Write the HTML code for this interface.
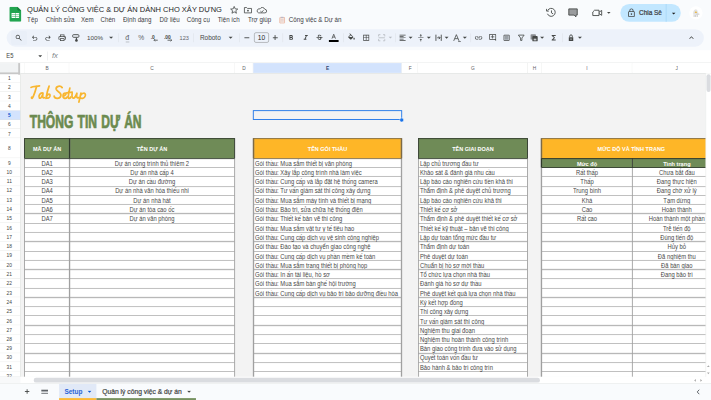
<!DOCTYPE html><html><head><meta charset="utf-8"><style>
html,body{margin:0;padding:0;width:711px;height:400px;overflow:hidden;background:#f9fbfd;}
#s{position:absolute;left:0;top:0;width:1600px;height:900px;transform:scale(0.444375);transform-origin:0 0;font-family:"Liberation Sans",sans-serif;background:#f9fbfd;overflow:hidden;}
.t{position:absolute;white-space:nowrap;line-height:0;height:0;}
.c{text-align:center;}
.b{position:absolute;box-sizing:border-box;}
.i{position:absolute;}
</style></head><body><div id="s">
<svg class="i" style="left:20.5px;top:15.4px" width="27" height="34" viewBox="0 0 27 34"><path d="M3 0 H18 L27 9 V31 A3 3 0 0 1 24 34 H3 A3 3 0 0 1 0 31 V3 A3 3 0 0 1 3 0Z" fill="#22a550"/><path d="M18 0 L27 9 H21 A3 3 0 0 1 18 6Z" fill="#16803c"/><rect x="5" y="14.5" width="17" height="11" rx="1" fill="#fff"/><rect x="5" y="17.8" width="17" height="1.1" fill="#22a550"/><rect x="5" y="21.3" width="17" height="1.1" fill="#22a550"/><rect x="12.9" y="14.5" width="1.1" height="11" fill="#22a550"/></svg>
<div class="t" style="left:61px;top:22.19px;font-size:18.2px;color:#1f1f1f;font-weight:normal;transform:scaleX(0.928);transform-origin:0 0;">QUẢN LÝ CÔNG VIỆC &amp; DỰ ÁN DÀNH CHO XÂY DỰNG</div>
<svg class="i" style="left:516px;top:12px" width="90" height="22" viewBox="0 0 90 22" fill="none" stroke="#444746" stroke-width="1.8">
<path d="M11 2.5 L13.3 8 L19 8.4 L14.6 12.1 L16 17.8 L11 14.7 L6 17.8 L7.4 12.1 L3 8.4 L8.7 8Z" stroke-linejoin="round"/>
<path d="M34 5 H39 L41 7 H50 V17 H34Z" stroke-linejoin="round"/><path d="M42 10 V14 M40 12 H44"/>
<path d="M66 17 H80 A4 4 0 0 0 80 9 A6 6 0 0 0 69 8 A4.5 4.5 0 0 0 66 17Z" stroke-linejoin="round"/><path d="M70 13 L73 15.5 L77 11"/>
</svg>
<div class="t" style="left:61px;top:45.30px;font-size:15px;color:#3c4043;font-weight:normal;transform:scaleX(0.935);transform-origin:0 0;">Tệp</div>
<div class="t" style="left:102.6px;top:45.30px;font-size:15px;color:#3c4043;font-weight:normal;transform:scaleX(0.935);transform-origin:0 0;">Chỉnh sửa</div>
<div class="t" style="left:182px;top:45.30px;font-size:15px;color:#3c4043;font-weight:normal;transform:scaleX(0.935);transform-origin:0 0;">Xem</div>
<div class="t" style="left:226px;top:45.30px;font-size:15px;color:#3c4043;font-weight:normal;transform:scaleX(0.935);transform-origin:0 0;">Chèn</div>
<div class="t" style="left:277px;top:45.30px;font-size:15px;color:#3c4043;font-weight:normal;transform:scaleX(0.935);transform-origin:0 0;">Định dạng</div>
<div class="t" style="left:359px;top:45.30px;font-size:15px;color:#3c4043;font-weight:normal;transform:scaleX(0.935);transform-origin:0 0;">Dữ liệu</div>
<div class="t" style="left:420px;top:45.30px;font-size:15px;color:#3c4043;font-weight:normal;transform:scaleX(0.935);transform-origin:0 0;">Công cụ</div>
<div class="t" style="left:490px;top:45.30px;font-size:15px;color:#3c4043;font-weight:normal;transform:scaleX(0.935);transform-origin:0 0;">Tiện ích</div>
<div class="t" style="left:558px;top:45.30px;font-size:15px;color:#3c4043;font-weight:normal;transform:scaleX(0.935);transform-origin:0 0;">Trợ giúp</div>
<svg class="i" style="left:628px;top:37px" width="14" height="16" viewBox="0 0 14 16">
<rect x="1.5" y="2" width="11" height="13.5" rx="1.5" fill="#f3e3dc" stroke="#e9a88e" stroke-width="1.5"/>
<rect x="4" y="0.5" width="6" height="3" rx="1" fill="#b9b9c9"/>
<path d="M4 7 H10 M4 10 H10" stroke="#d9c0c0" stroke-width="1"/></svg>
<div class="t" style="left:650px;top:45.30px;font-size:15px;color:#3c4043;font-weight:normal;transform:scaleX(0.935);transform-origin:0 0;">Công việc &amp; Dự án</div>
<svg class="i" style="left:1226px;top:14px" width="160" height="30" viewBox="0 0 160 30" fill="none" stroke="#444746" stroke-width="2">
<path d="M6.5 9.5 A9 9 0 1 1 6 17" /><path d="M4 6 V11 H9" stroke-linejoin="round"/><path d="M15 9.5 V15 L19 17.5"/>
<path d="M54 6 H73 V20 H70 V24 L66 20 H54Z" stroke-linejoin="round" fill="#9a9c9e"/>
<path d="M112 9 H122 V21 H108 V13Z M122 13.5 L128 9.5 V20.5 L122 16.5" stroke-linejoin="round"/>
<path d="M140 13 L144 17 L148 13Z" fill="#444746" stroke="none"/>
</svg>
<div class="b" style="left:1396px;top:9px;width:136px;height:40px;background:#c2e7ff;border-radius:20px;"></div>
<div class="b" style="left:1498px;top:9px;width:2px;height:40px;background:#a9d7f7;"></div>
<svg class="i" style="left:1410px;top:18px" width="22" height="22" viewBox="0 0 24 24"><path fill="#444746" d="M18 8h-1V6c0-2.76-2.24-5-5-5S7 3.24 7 6v2H6c-1.1 0-2 .9-2 2v10c0 1.1.9 2 2 2h12c1.1 0 2-.9 2-2V10c0-1.1-.9-2-2-2zM9 6c0-1.66 1.34-3 3-3s3 1.34 3 3v2H9V6zm9 14H6V10h12v10zm-6-3c1.1 0 2-.9 2-2s-.9-2-2-2-2 .9-2 2 .9 2 2 2z"/></svg>
<div class="t" style="left:1438px;top:28.98px;font-size:14.5px;color:#3c4043;font-weight:normal;-webkit-text-stroke:0.5px #3c4043;">Chia Sẻ</div>
<svg class="i" style="left:1511px;top:27px" width="10" height="8" viewBox="0 0 12 10"><path d="M1 2 L6 7 L11 2Z" fill="#1f1f1f"/></svg>
<svg class="i" style="left:1550px;top:13px" width="32" height="32" viewBox="0 0 32 32"><circle cx="16" cy="16" r="15" fill="#fff"/><path d="M10 20 Q9 10 15 8 Q20 8 20 13 L22 17 Q23 21 19 21Z" fill="#e3e3e3"/><ellipse cx="16" cy="14.5" rx="2.5" ry="1.6" fill="#e9b43a"/><path d="M11 23 H13 M14.5 23 H16.5 M18 23 H20" stroke="#555" stroke-width="1.5"/><path d="M17 19 H24" stroke="#ccc" stroke-width="2"/></svg>
<div class="b" style="left:15px;top:65.5px;width:1569px;height:39px;background:#edf2fa;border-radius:20px;"></div>
<div class="b" style="left:25px;top:69.5px;width:36px;height:31px;background:#e9eff8;border-radius:4px;"></div>
<svg class="i" style="left:32.80px;top:75.75px" width="18" height="18" viewBox="0 -960 960 960"><path d="M784-120 532-372q-30 24-69 38t-83 14q-109 0-184.5-75.5T120-580q0-109 75.5-184.5T380-840q109 0 184.5 75.5T640-580q0 44-14 83t-38 69l252 252-56 56ZM380-400q75 0 127.5-52.5T560-580q0-75-52.5-127.5T380-760q-75 0-127.5 52.5T200-580q0 75 52.5 127.5T380-400Z" fill="#444746"/></svg>
<svg class="i" style="left:68.80px;top:76.75px" width="18" height="18" viewBox="0 -960 960 960"><path d="M280-200v-80h284q63 0 109.5-40T720-420q0-60-46.5-100T564-560H312l104 104-56 56-200-200 200-200 56 56-104 104h252q97 0 166.5 63T800-420q0 94-69.5 157T564-200H280Z" fill="#444746"/></svg>
<svg class="i" style="left:99.00px;top:76.75px" width="18" height="18" viewBox="0 -960 960 960"><path d="M396-200q-97 0-166.5-63T160-420q0-94 69.5-157T396-640h252L544-744l56-56 200 200-200 200-56-56 104-104H396q-63 0-109.5 40T240-420q0 60 46.5 100T396-280h284v80H396Z" fill="#444746"/></svg>
<svg class="i" style="left:129.70px;top:74.75px" width="20" height="20" viewBox="0 -960 960 960"><path d="M640-640v-120H320v120h-80v-200h480v200h-80Zm-480 80h640-640Zm560 100q17 0 28.5-11.5T760-500q0-17-11.5-28.5T720-540q-17 0-28.5 11.5T680-500q0 17 11.5 28.5T720-460Zm-80 260v-160H320v160h320Zm80 80H240v-160H80v-240q0-51 35-85.5t85-34.5h560q51 0 85.5 34.5T880-520v240H720v160Zm80-240v-160q0-17-11.5-28.5T760-560H200q-17 0-28.5 11.5T160-520v160h80v-80h480v80h80Z" fill="#444746"/></svg>
<svg class="i" style="left:161.00px;top:74.75px" width="20" height="20" viewBox="0 0 20 20"><rect x="2.5" y="3" width="14" height="6" rx="2" fill="none" stroke="#444746" stroke-width="2"/><path d="M11 9 L8 16 A3 3 0 0 0 14 16 Z" fill="#444746"/></svg>
<div class="t" style="left:196px;top:85.15px;font-size:14px;color:#444746;font-weight:normal;">100%</div>
<svg class="i" style="left:245.0px;top:82px" width="10" height="6" viewBox="0 0 10 6"><path d="M0 0 L5 5 L10 0Z" fill="#444746"/></svg>
<div class="b" style="left:266px;top:74.6px;width:1.2px;height:20px;background:#d9dde3;"></div>
<div class="b" style="left:435px;top:74.6px;width:1.2px;height:20px;background:#d9dde3;"></div>
<div class="b" style="left:538.7px;top:74.6px;width:1.2px;height:20px;background:#d9dde3;"></div>
<div class="b" style="left:636px;top:74.6px;width:1.2px;height:20px;background:#d9dde3;"></div>
<div class="b" style="left:773px;top:74.6px;width:1.2px;height:20px;background:#d9dde3;"></div>
<div class="b" style="left:889.3px;top:74.6px;width:1.2px;height:20px;background:#d9dde3;"></div>
<div class="b" style="left:1058.8px;top:74.6px;width:1.2px;height:20px;background:#d9dde3;"></div>
<div class="b" style="left:1265.8px;top:74.6px;width:1.2px;height:20px;background:#d9dde3;"></div>
<div class="t" style="left:282px;top:85.46px;font-size:16px;color:#5f6368;font-weight:normal;">đ</div>
<div class="b" style="left:282.5px;top:93.5px;width:8px;height:1.3px;background:#80868b;"></div>
<div class="t" style="left:311px;top:85.80px;font-size:15px;color:#5f6368;font-weight:normal;">%</div>
<svg class="i" style="left:338.00px;top:74.75px" width="20" height="20" viewBox="0 0 20 20"><text x="1" y="12" font-size="11" font-weight="bold" fill="#444746" font-family="Liberation Sans">.0</text><path d="M17 15.5 H9 M11 13 L8.5 15.5 L11 18" stroke="#444746" stroke-width="1.8" fill="none"/></svg>
<svg class="i" style="left:369.00px;top:74.75px" width="22" height="20" viewBox="0 0 22 20"><text x="0" y="12" font-size="11" font-weight="bold" fill="#444746" font-family="Liberation Sans">.00</text><path d="M8 15.5 H17 M15 13 L17.5 15.5 L15 18" stroke="#444746" stroke-width="1.8" fill="none"/></svg>
<div class="t" style="left:403.5px;top:85.65px;font-size:14px;color:#5f6368;font-weight:normal;transform:scaleX(0.9);transform-origin:0 0;">123</div>
<div class="t" style="left:450px;top:85.48px;font-size:14.5px;color:#444746;font-weight:normal;">Roboto</div>
<svg class="i" style="left:514.0px;top:82px" width="10" height="6" viewBox="0 0 10 6"><path d="M0 0 L5 5 L10 0Z" fill="#444746"/></svg>
<div class="b" style="left:549.5px;top:84px;width:11px;height:1.6px;background:#444746;"></div>
<div class="b" style="left:613.5px;top:84px;width:11px;height:1.6px;background:#444746;"></div>
<div class="b" style="left:618.2px;top:79px;width:1.6px;height:11px;background:#444746;"></div>
<div class="b" style="left:572px;top:73.4px;width:33.3px;height:22.6px;border:1.5px solid #747775;border-radius:4px;"></div>
<div class="t c" style="left:188.60000000000002px;width:800px;top:85.30px;font-size:15px;color:#1f1f1f;font-weight:normal;">10</div>
<svg class="i" style="left:646.00px;top:75.75px" width="18" height="18" viewBox="0 0 24 24"><path d="M15.6 10.79c.97-.67 1.65-1.77 1.65-2.79 0-2.26-1.75-4-4-4H7v14h7.04c2.09 0 3.71-1.7 3.71-3.79 0-1.52-.86-2.82-2.15-3.42zM10 6.5h3c.83 0 1.5.67 1.5 1.5s-.67 1.5-1.5 1.5h-3v-3zm3.5 9H10v-3h3.5c.83 0 1.5.67 1.5 1.5s-.67 1.5-1.5 1.5z" fill="#444746"/></svg>
<svg class="i" style="left:679.00px;top:75.75px" width="18" height="18" viewBox="0 0 24 24"><path d="M10 4v3h2.21l-3.42 8H6v3h8v-3h-2.21l3.42-8H18V4z" fill="#444746"/></svg>
<svg class="i" style="left:710.00px;top:75.75px" width="18" height="18" viewBox="0 0 24 24"><path d="M7.24 8.75c-.26-.48-.39-1.03-.39-1.67 0-.61.13-1.16.4-1.67.26-.5.63-.93 1.11-1.29.48-.35 1.05-.63 1.7-.83.66-.19 1.39-.29 2.18-.29.81 0 1.54.11 2.21.34.66.22 1.23.54 1.69.94.47.4.83.88 1.08 1.43.25.55.38 1.15.38 1.81h-3.01c0-.31-.05-.59-.15-.85-.09-.27-.24-.49-.44-.68-.2-.19-.45-.33-.75-.44-.3-.1-.66-.16-1.06-.16-.39 0-.74.04-1.03.13-.29.09-.53.21-.72.36-.19.16-.34.34-.44.55-.1.21-.15.43-.15.66 0 .48.25.88.74 1.21.38.25.77.48 1.41.7H7.39c-.05-.08-.11-.17-.15-.25zM21 12v-2H3v2h9.62c.18.07.4.14.55.2.37.17.66.34.87.51.21.17.35.36.43.57.07.2.11.43.11.69 0 .23-.05.45-.14.66-.09.2-.23.38-.42.53-.19.15-.42.26-.71.35-.29.08-.63.13-1.01.13-.43 0-.83-.04-1.18-.13s-.66-.23-.91-.42c-.25-.19-.45-.44-.59-.75-.14-.31-.25-.76-.25-1.21H6.4c0 .55.08 1.13.24 1.58.16.45.37.85.65 1.21.28.35.6.66.98.92.37.26.78.48 1.22.65.44.17.9.3 1.38.39.48.08.96.13 1.44.13.8 0 1.53-.09 2.18-.28s1.21-.45 1.67-.79c.46-.34.82-.77 1.07-1.27s.38-1.07.38-1.71c0-.6-.1-1.14-.31-1.61-.05-.11-.11-.23-.17-.33H21z" fill="#444746"/></svg>
<svg class="i" style="left:739.00px;top:73.75px" width="24" height="22" viewBox="0 0 24 22"><path d="M8 13 L12 3 L16 13 M9.5 9.5 H14.5" stroke="#444746" stroke-width="1.7" fill="none"/><rect x="1" y="16" width="22" height="4.5" fill="#000"/></svg>
<svg class="i" style="left:781.00px;top:74.75px" width="20" height="20" viewBox="0 0 24 24"><path d="M16.56 8.94 7.62 0 6.21 1.41l2.38 2.38-5.15 5.15c-.59.59-.59 1.54 0 2.12l5.5 5.5c.29.29.68.44 1.06.44s.77-.15 1.06-.44l5.5-5.5c.59-.58.59-1.53 0-2.12zM5.21 10 10 5.21 14.79 10H5.21zM19 11.5s-2 2.17-2 3.5c0 1.1.9 2 2 2s2-.9 2-2c0-1.33-2-3.5-2-3.5z" fill="#444746"/></svg>
<svg class="i" style="left:815.00px;top:75.75px" width="18" height="18" viewBox="0 0 24 24"><path d="M3 3v18h18V3H3zm8 16H5v-6h6v6zm0-8H5V5h6v6zm8 8h-6v-6h6v6zm0-8h-6V5h6v6z" fill="#444746"/></svg>
<svg class="i" style="left:849.50px;top:75.75px" width="18" height="18" viewBox="0 0 18 18"><g fill="none" stroke="#b9bdc3" stroke-width="2"><path d="M2 6 V2 H6 M12 2 H16 V6 M2 12 V16 H6 M12 16 H16 V12 M2 9 H16"/></g></svg>
<svg class="i" style="left:874.0px;top:82px" width="9" height="6" viewBox="0 0 10 6"><path d="M0 0 L5 5 L10 0Z" fill="#b9bdc3"/></svg>
<svg class="i" style="left:897.00px;top:75.75px" width="18" height="18" viewBox="0 0 24 24"><path d="M15 15H3v2h12v-2zm0-8H3v2h12V7zM3 13h18v-2H3v2zm0 8h18v-2H3v2zM3 3v2h18V3H3z" fill="#444746"/></svg>
<svg class="i" style="left:919.4px;top:82px" width="10" height="6" viewBox="0 0 10 6"><path d="M0 0 L5 5 L10 0Z" fill="#444746"/></svg>
<svg class="i" style="left:938.00px;top:75.75px" width="18" height="18" viewBox="0 0 24 24"><path d="M8 19h3v4h2v-4h3l-4-4-4 4zm8-14h-3V1h-2v4H8l4 4 4-4zM4 11v2h16v-2H4z" fill="#444746"/></svg>
<svg class="i" style="left:960.4px;top:82px" width="10" height="6" viewBox="0 0 10 6"><path d="M0 0 L5 5 L10 0Z" fill="#444746"/></svg>
<svg class="i" style="left:978.00px;top:75.75px" width="18" height="18" viewBox="0 0 18 18"><g fill="none" stroke="#444746" stroke-width="2"><path d="M3 2 V16 M15 2 V16 M6 9 H12 M9.5 6 L12.5 9 L9.5 12"/></g></svg>
<svg class="i" style="left:999.6px;top:82px" width="10" height="6" viewBox="0 0 10 6"><path d="M0 0 L5 5 L10 0Z" fill="#444746"/></svg>
<svg class="i" style="left:1018.00px;top:74.75px" width="20" height="20" viewBox="0 0 20 20"><path d="M3 17 L9 3 L15 17 M5.5 12 H12.5" stroke="#444746" stroke-width="1.8" fill="none"/><path d="M13 18.5 H19" stroke="#444746" stroke-width="1.6"/></svg>
<svg class="i" style="left:1040.5px;top:82px" width="10" height="6" viewBox="0 0 10 6"><path d="M0 0 L5 5 L10 0Z" fill="#444746"/></svg>
<svg class="i" style="left:1067.00px;top:74.75px" width="20" height="20" viewBox="0 0 24 24"><path d="M3.9 12c0-1.71 1.39-3.1 3.1-3.1h4V7H7c-2.76 0-5 2.24-5 5s2.24 5 5 5h4v-1.9H7c-1.71 0-3.1-1.39-3.1-3.1zM8 13h8v-2H8v2zm9-6h-4v1.9h4c1.71 0 3.1 1.39 3.1 3.1s-1.39 3.1-3.1 3.1h-4V17h4c2.76 0 5-2.24 5-5s-2.24-5-5-5z" fill="#444746"/></svg>
<svg class="i" style="left:1099.20px;top:75.25px" width="19" height="19" viewBox="0 0 24 24"><path d="M22 4c0-1.1-.9-2-2-2H4c-1.1 0-1.99.9-1.99 2L2 16c0 1.1.9 2 2 2h14l4 4V4zm-2 13.17L18.83 16H4V4h16v13.17zM13 5h-2v4H7v2h4v4h2v-4h4V9h-4z" fill="#444746"/></svg>
<svg class="i" style="left:1131.00px;top:75.75px" width="18" height="18" viewBox="0 0 24 24"><rect x="6" y="6" width="12" height="12" fill="#9aa0a6"/><path d="M19 3H5c-1.1 0-2 .9-2 2v14c0 1.1.9 2 2 2h14c1.1 0 2-.9 2-2V5c0-1.1-.9-2-2-2zm0 16H5V5h14v14z" fill="#444746"/></svg>
<svg class="i" style="left:1163.80px;top:75.75px" width="18" height="18" viewBox="0 0 18 18"><path d="M2.5 3 H15.5 L10.5 9.5 V15 L7.5 15 V9.5Z" fill="none" stroke="#444746" stroke-width="1.8" stroke-linejoin="round"/></svg>
<svg class="i" style="left:1191.70px;top:74.75px" width="20" height="20" viewBox="0 0 20 20"><rect x="2" y="2" width="12" height="12" rx="2" fill="#8a8d91"/><rect x="6" y="6" width="12" height="12" rx="2" fill="#444746"/><rect x="9" y="12" width="6" height="4" fill="#c7c9cc"/></svg>
<svg class="i" style="left:1215.0px;top:82px" width="10" height="6" viewBox="0 0 10 6"><path d="M0 0 L5 5 L10 0Z" fill="#444746"/></svg>
<svg class="i" style="left:1237.00px;top:75.75px" width="18" height="18" viewBox="0 0 24 24"><path d="M18 4H6v2l6.5 6L6 18v2h12v-3h-7l5-5-5-5h7z" fill="#444746"/></svg>
<svg class="i" style="left:1276.00px;top:75.75px" width="18" height="18" viewBox="0 0 18 18"><path d="M4 8 H14 V16 H4Z" fill="#444746"/><path d="M6 8 V5.5 A3 3 0 0 1 12 5.5 V8" stroke="#444746" stroke-width="2" fill="none"/><circle cx="9" cy="12" r="1.5" fill="#edf2fa"/></svg>
<svg class="i" style="left:1300.4px;top:82px" width="10" height="6" viewBox="0 0 10 6"><path d="M0 0 L5 5 L10 0Z" fill="#444746"/></svg>
<svg class="i" style="left:1546.00px;top:74.75px" width="20" height="20" viewBox="0 0 24 24"><path d="M12 8l-6 6 1.41 1.41L12 10.83l4.59 4.58L18 14z" fill="#444746"/></svg>
<div class="b" style="left:0px;top:113.4px;width:1600px;height:27.1px;background:#fff;"></div>
<div class="t" style="left:14px;top:126.13px;font-size:15.5px;color:#444746;font-weight:normal;transform:scaleX(0.85);transform-origin:0 0;">E5</div>
<svg class="i" style="left:85.5px;top:123.5px" width="9" height="6" viewBox="0 0 10 6"><path d="M0 0 L5 5 L10 0Z" fill="#444746"/></svg>
<div class="b" style="left:106px;top:116px;width:1px;height:20px;background:#dadce0;"></div>
<div class="t" style="left:117px;top:126.11px;font-size:17px;color:#80868b;font-weight:normal;font-style:italic;">fx</div>
<div class="b" style="left:46px;top:165.2px;width:1542px;height:683.0px;background:#f3f3f3;"></div>
<div class="b" style="left:0px;top:140.5px;width:1600px;height:24.69999999999999px;background:#fff;border-top:1px solid #e1e3e1;border-bottom:1px solid #c4c7c5;"></div>
<div class="b" style="left:46px;top:141.5px;width:9.399999999999999px;height:22.69999999999999px;background:#fff;border-right:1px solid #e1e3e1;"></div>
<div class="b" style="left:55.4px;top:141.5px;width:101.0px;height:22.69999999999999px;background:#fff;border-right:1px solid #e1e3e1;"></div>
<div class="t c" style="left:-294.1px;width:800px;top:153.34px;font-size:12px;color:#5f6368;font-weight:normal;transform:scaleX(0.9);transform-origin:50% 0;">B</div>
<div class="b" style="left:156.4px;top:141.5px;width:371.30000000000007px;height:22.69999999999999px;background:#fff;border-right:1px solid #e1e3e1;"></div>
<div class="t c" style="left:-57.94999999999999px;width:800px;top:153.34px;font-size:12px;color:#5f6368;font-weight:normal;transform:scaleX(0.9);transform-origin:50% 0;">C</div>
<div class="b" style="left:527.7px;top:141.5px;width:42.09999999999991px;height:22.69999999999999px;background:#fff;border-right:1px solid #e1e3e1;"></div>
<div class="t c" style="left:148.75px;width:800px;top:153.34px;font-size:12px;color:#5f6368;font-weight:normal;transform:scaleX(0.9);transform-origin:50% 0;">D</div>
<div class="b" style="left:569.8px;top:141.5px;width:334.4000000000001px;height:22.69999999999999px;background:#d3e3fd;border-right:1px solid #e1e3e1;"></div>
<div class="t c" style="left:337.0px;width:800px;top:153.34px;font-size:12px;color:#33466e;font-weight:bold;transform:scaleX(0.9);transform-origin:50% 0;">E</div>
<div class="b" style="left:904.2px;top:141.5px;width:37.09999999999991px;height:22.69999999999999px;background:#fff;border-right:1px solid #e1e3e1;"></div>
<div class="t c" style="left:522.75px;width:800px;top:153.34px;font-size:12px;color:#5f6368;font-weight:normal;transform:scaleX(0.9);transform-origin:50% 0;">F</div>
<div class="b" style="left:941.3px;top:141.5px;width:246.20000000000005px;height:22.69999999999999px;background:#fff;border-right:1px solid #e1e3e1;"></div>
<div class="t c" style="left:664.4000000000001px;width:800px;top:153.34px;font-size:12px;color:#5f6368;font-weight:normal;transform:scaleX(0.9);transform-origin:50% 0;">G</div>
<div class="b" style="left:1187.5px;top:141.5px;width:31.09999999999991px;height:22.69999999999999px;background:#fff;border-right:1px solid #e1e3e1;"></div>
<div class="t c" style="left:803.05px;width:800px;top:153.34px;font-size:12px;color:#5f6368;font-weight:normal;transform:scaleX(0.9);transform-origin:50% 0;">H</div>
<div class="b" style="left:1218.6px;top:141.5px;width:204.80000000000018px;height:22.69999999999999px;background:#fff;border-right:1px solid #e1e3e1;"></div>
<div class="t c" style="left:921.0px;width:800px;top:153.34px;font-size:12px;color:#5f6368;font-weight:normal;transform:scaleX(0.9);transform-origin:50% 0;">I</div>
<div class="b" style="left:1423.4px;top:141.5px;width:199.5999999999999px;height:22.69999999999999px;background:#fff;border-right:1px solid #e1e3e1;"></div>
<div class="t c" style="left:1123.2px;width:800px;top:153.34px;font-size:12px;color:#5f6368;font-weight:normal;transform:scaleX(0.9);transform-origin:50% 0;">J</div>
<div class="b" style="left:0px;top:165.2px;width:46px;height:20.879999999999995px;background:#fff;border-bottom:1px solid #e1e3e1;border-right:1px solid #e1e3e1;"></div>
<div class="t c" style="left:-379px;width:800px;top:175.83px;font-size:11px;color:#444746;font-weight:normal;">1</div>
<div class="b" style="left:0px;top:186.07999999999998px;width:46px;height:20.879999999999995px;background:#fff;border-bottom:1px solid #e1e3e1;border-right:1px solid #e1e3e1;"></div>
<div class="t c" style="left:-379px;width:800px;top:196.71px;font-size:11px;color:#444746;font-weight:normal;">2</div>
<div class="b" style="left:0px;top:206.95999999999998px;width:46px;height:20.879999999999995px;background:#fff;border-bottom:1px solid #e1e3e1;border-right:1px solid #e1e3e1;"></div>
<div class="t c" style="left:-379px;width:800px;top:217.59px;font-size:11px;color:#444746;font-weight:normal;">3</div>
<div class="b" style="left:0px;top:227.83999999999997px;width:46px;height:20.879999999999995px;background:#fff;border-bottom:1px solid #e1e3e1;border-right:1px solid #e1e3e1;"></div>
<div class="t c" style="left:-379px;width:800px;top:238.47px;font-size:11px;color:#444746;font-weight:normal;">4</div>
<div class="b" style="left:0px;top:248.71999999999997px;width:46px;height:20.879999999999995px;background:#d3e3fd;border-bottom:1px solid #e1e3e1;border-right:1px solid #e1e3e1;"></div>
<div class="t c" style="left:-379px;width:800px;top:259.35px;font-size:11px;color:#0b57d0;font-weight:bold;">5</div>
<div class="b" style="left:0px;top:269.59999999999997px;width:46px;height:20.879999999999995px;background:#fff;border-bottom:1px solid #e1e3e1;border-right:1px solid #e1e3e1;"></div>
<div class="t c" style="left:-379px;width:800px;top:280.23px;font-size:11px;color:#444746;font-weight:normal;">6</div>
<div class="b" style="left:0px;top:290.47999999999996px;width:46px;height:20.879999999999995px;background:#fff;border-bottom:1px solid #e1e3e1;border-right:1px solid #e1e3e1;"></div>
<div class="t c" style="left:-379px;width:800px;top:301.11px;font-size:11px;color:#444746;font-weight:normal;">7</div>
<div class="b" style="left:0px;top:311.35999999999996px;width:46px;height:44.69999999999999px;background:#fff;border-bottom:1px solid #e1e3e1;border-right:1px solid #e1e3e1;"></div>
<div class="t c" style="left:-379px;width:800px;top:333.90px;font-size:11px;color:#444746;font-weight:normal;">8</div>
<div class="b" style="left:0px;top:356.05999999999995px;width:46px;height:20.879999999999995px;background:#fff;border-bottom:1px solid #e1e3e1;border-right:1px solid #e1e3e1;"></div>
<div class="t c" style="left:-379px;width:800px;top:366.69px;font-size:11px;color:#444746;font-weight:normal;">9</div>
<div class="b" style="left:0px;top:376.93999999999994px;width:46px;height:20.879999999999995px;background:#fff;border-bottom:1px solid #e1e3e1;border-right:1px solid #e1e3e1;"></div>
<div class="t c" style="left:-379px;width:800px;top:387.57px;font-size:11px;color:#444746;font-weight:normal;">10</div>
<div class="b" style="left:0px;top:397.81999999999994px;width:46px;height:20.879999999999995px;background:#fff;border-bottom:1px solid #e1e3e1;border-right:1px solid #e1e3e1;"></div>
<div class="t c" style="left:-379px;width:800px;top:408.45px;font-size:11px;color:#444746;font-weight:normal;">11</div>
<div class="b" style="left:0px;top:418.69999999999993px;width:46px;height:20.879999999999995px;background:#fff;border-bottom:1px solid #e1e3e1;border-right:1px solid #e1e3e1;"></div>
<div class="t c" style="left:-379px;width:800px;top:429.33px;font-size:11px;color:#444746;font-weight:normal;">12</div>
<div class="b" style="left:0px;top:439.5799999999999px;width:46px;height:20.879999999999995px;background:#fff;border-bottom:1px solid #e1e3e1;border-right:1px solid #e1e3e1;"></div>
<div class="t c" style="left:-379px;width:800px;top:450.21px;font-size:11px;color:#444746;font-weight:normal;">13</div>
<div class="b" style="left:0px;top:460.4599999999999px;width:46px;height:20.879999999999995px;background:#fff;border-bottom:1px solid #e1e3e1;border-right:1px solid #e1e3e1;"></div>
<div class="t c" style="left:-379px;width:800px;top:471.09px;font-size:11px;color:#444746;font-weight:normal;">14</div>
<div class="b" style="left:0px;top:481.3399999999999px;width:46px;height:20.879999999999995px;background:#fff;border-bottom:1px solid #e1e3e1;border-right:1px solid #e1e3e1;"></div>
<div class="t c" style="left:-379px;width:800px;top:491.97px;font-size:11px;color:#444746;font-weight:normal;">15</div>
<div class="b" style="left:0px;top:502.2199999999999px;width:46px;height:20.879999999999995px;background:#fff;border-bottom:1px solid #e1e3e1;border-right:1px solid #e1e3e1;"></div>
<div class="t c" style="left:-379px;width:800px;top:512.85px;font-size:11px;color:#444746;font-weight:normal;">16</div>
<div class="b" style="left:0px;top:523.0999999999999px;width:46px;height:20.879999999999995px;background:#fff;border-bottom:1px solid #e1e3e1;border-right:1px solid #e1e3e1;"></div>
<div class="t c" style="left:-379px;width:800px;top:533.73px;font-size:11px;color:#444746;font-weight:normal;">17</div>
<div class="b" style="left:0px;top:543.9799999999999px;width:46px;height:20.879999999999995px;background:#fff;border-bottom:1px solid #e1e3e1;border-right:1px solid #e1e3e1;"></div>
<div class="t c" style="left:-379px;width:800px;top:554.61px;font-size:11px;color:#444746;font-weight:normal;">18</div>
<div class="b" style="left:0px;top:564.8599999999999px;width:46px;height:20.879999999999995px;background:#fff;border-bottom:1px solid #e1e3e1;border-right:1px solid #e1e3e1;"></div>
<div class="t c" style="left:-379px;width:800px;top:575.49px;font-size:11px;color:#444746;font-weight:normal;">19</div>
<div class="b" style="left:0px;top:585.7399999999999px;width:46px;height:20.879999999999995px;background:#fff;border-bottom:1px solid #e1e3e1;border-right:1px solid #e1e3e1;"></div>
<div class="t c" style="left:-379px;width:800px;top:596.37px;font-size:11px;color:#444746;font-weight:normal;">20</div>
<div class="b" style="left:0px;top:606.6199999999999px;width:46px;height:20.879999999999995px;background:#fff;border-bottom:1px solid #e1e3e1;border-right:1px solid #e1e3e1;"></div>
<div class="t c" style="left:-379px;width:800px;top:617.25px;font-size:11px;color:#444746;font-weight:normal;">21</div>
<div class="b" style="left:0px;top:627.4999999999999px;width:46px;height:20.879999999999995px;background:#fff;border-bottom:1px solid #e1e3e1;border-right:1px solid #e1e3e1;"></div>
<div class="t c" style="left:-379px;width:800px;top:638.13px;font-size:11px;color:#444746;font-weight:normal;">22</div>
<div class="b" style="left:0px;top:648.3799999999999px;width:46px;height:20.879999999999995px;background:#fff;border-bottom:1px solid #e1e3e1;border-right:1px solid #e1e3e1;"></div>
<div class="t c" style="left:-379px;width:800px;top:659.01px;font-size:11px;color:#444746;font-weight:normal;">23</div>
<div class="b" style="left:0px;top:669.2599999999999px;width:46px;height:20.879999999999995px;background:#fff;border-bottom:1px solid #e1e3e1;border-right:1px solid #e1e3e1;"></div>
<div class="t c" style="left:-379px;width:800px;top:679.89px;font-size:11px;color:#444746;font-weight:normal;">24</div>
<div class="b" style="left:0px;top:690.1399999999999px;width:46px;height:20.879999999999995px;background:#fff;border-bottom:1px solid #e1e3e1;border-right:1px solid #e1e3e1;"></div>
<div class="t c" style="left:-379px;width:800px;top:700.77px;font-size:11px;color:#444746;font-weight:normal;">25</div>
<div class="b" style="left:0px;top:711.0199999999999px;width:46px;height:20.879999999999995px;background:#fff;border-bottom:1px solid #e1e3e1;border-right:1px solid #e1e3e1;"></div>
<div class="t c" style="left:-379px;width:800px;top:721.65px;font-size:11px;color:#444746;font-weight:normal;">26</div>
<div class="b" style="left:0px;top:731.8999999999999px;width:46px;height:20.879999999999995px;background:#fff;border-bottom:1px solid #e1e3e1;border-right:1px solid #e1e3e1;"></div>
<div class="t c" style="left:-379px;width:800px;top:742.53px;font-size:11px;color:#444746;font-weight:normal;">27</div>
<div class="b" style="left:0px;top:752.7799999999999px;width:46px;height:20.879999999999995px;background:#fff;border-bottom:1px solid #e1e3e1;border-right:1px solid #e1e3e1;"></div>
<div class="t c" style="left:-379px;width:800px;top:763.41px;font-size:11px;color:#444746;font-weight:normal;">28</div>
<div class="b" style="left:0px;top:773.6599999999999px;width:46px;height:20.879999999999995px;background:#fff;border-bottom:1px solid #e1e3e1;border-right:1px solid #e1e3e1;"></div>
<div class="t c" style="left:-379px;width:800px;top:784.29px;font-size:11px;color:#444746;font-weight:normal;">29</div>
<div class="b" style="left:0px;top:794.5399999999998px;width:46px;height:20.879999999999995px;background:#fff;border-bottom:1px solid #e1e3e1;border-right:1px solid #e1e3e1;"></div>
<div class="t c" style="left:-379px;width:800px;top:805.17px;font-size:11px;color:#444746;font-weight:normal;">30</div>
<div class="b" style="left:0px;top:815.4199999999998px;width:46px;height:20.879999999999995px;background:#fff;border-bottom:1px solid #e1e3e1;border-right:1px solid #e1e3e1;"></div>
<div class="t c" style="left:-379px;width:800px;top:826.05px;font-size:11px;color:#444746;font-weight:normal;">31</div>
<div class="b" style="left:0px;top:836.2999999999998px;width:46px;height:11.900000000000205px;background:#fff;border-bottom:1px solid #e1e3e1;border-right:1px solid #e1e3e1;"></div>
<div class="t c" style="left:-379px;width:800px;top:846.93px;font-size:11px;color:#444746;font-weight:normal;">32</div>
<div class="b" style="left:0px;top:141.5px;width:46px;height:23.69999999999999px;background:#f1f3f4;"></div>
<div class="b" style="left:41.4px;top:141.5px;width:3.8px;height:26.19999999999999px;background:#c7c7c7;"></div>
<div class="b" style="left:0px;top:163.2px;width:45.2px;height:4.2px;background:#c7c7c7;"></div>
<div class="b" style="left:46px;top:165.2px;width:1px;height:683.0px;background:#e1e3e1;"></div>
<svg class="i" style="left:63.01px;top:184.52px" width="139.5" height="49.44" viewBox="0 0 711 252" fill="none" stroke="#f8b630" stroke-width="20" stroke-linecap="round" stroke-linejoin="round"><path d="M35 60 C60 40, 100 52, 132 42"/><path d="M98 50 C85 100, 70 150, 50 183 C45 192, 36 182, 42 172"/><path d="M172 125 C140 115, 115 160, 130 180 C140 192, 162 175, 172 125 C166 160, 165 186, 188 178"/><path d="M242 45 C225 90, 212 150, 206 185 C215 130, 258 122, 252 160 C246 188, 214 190, 210 172"/><path d="M392 62 C372 35, 318 45, 323 80 C328 110, 388 112, 377 155 C366 196, 303 192, 300 160"/><path d="M405 160 C430 155, 447 130, 426 124 C398 124, 393 180, 420 185 C436 188, 446 176, 452 168"/><path d="M480 68 C470 110, 455 170, 466 185 C476 190, 486 180, 492 170 M443 122 L507 114"/><path d="M507 128 C500 160, 505 188, 526 182 C546 175, 555 140, 561 127 C555 160, 555 186, 582 177"/><path d="M607 126 C598 170, 590 205, 584 228 M598 162 C612 118, 668 114, 657 155 C646 192, 610 192, 600 175"/></svg>
<div class="t" style="left:66.5px;top:273.06px;font-size:40.8px;color:#6b8a4f;font-weight:bold;transform:scaleX(0.665);transform-origin:0 0;-webkit-text-stroke:1.6px #6b8a4f;word-spacing:3px;">THÔNG TIN DỰ ÁN</div>
<div class="b" style="left:568.8px;top:247.71999999999997px;width:335.9000000000001px;height:22.38px;border:2px solid #1a73e8;"></div>
<div class="b" style="left:899.2px;top:265.09999999999997px;width:10px;height:10px;background:#1a73e8;border-radius:50%;border:1px solid #fff;"></div>
<div class="b" style="left:55.4px;top:356.05999999999995px;width:472.30000000000007px;height:492.1400000000001px;background:#fff;"></div>
<div class="b" style="left:55.4px;top:375.80872011251756px;width:472.30000000000007px;height:2.250351617440225px;background:#b8b8b8;"></div>
<div class="b" style="left:55.4px;top:396.0618846694796px;width:472.30000000000007px;height:2.250351617440225px;background:#b8b8b8;"></div>
<div class="b" style="left:55.4px;top:418.56540084388183px;width:472.30000000000007px;height:2.250351617440225px;background:#b8b8b8;"></div>
<div class="b" style="left:55.4px;top:438.81856540084385px;width:472.30000000000007px;height:2.250351617440225px;background:#b8b8b8;"></div>
<div class="b" style="left:55.4px;top:459.07172995780587px;width:472.30000000000007px;height:2.250351617440225px;background:#b8b8b8;"></div>
<div class="b" style="left:55.4px;top:479.3248945147679px;width:472.30000000000007px;height:2.250351617440225px;background:#b8b8b8;"></div>
<div class="b" style="left:55.4px;top:501.82841068917014px;width:472.30000000000007px;height:2.250351617440225px;background:#b8b8b8;"></div>
<div class="b" style="left:55.4px;top:522.0815752461322px;width:472.30000000000007px;height:2.250351617440225px;background:#b8b8b8;"></div>
<div class="b" style="left:55.4px;top:542.3347398030942px;width:472.30000000000007px;height:2.250351617440225px;background:#b8b8b8;"></div>
<div class="b" style="left:55.4px;top:564.8382559774965px;width:472.30000000000007px;height:2.250351617440225px;background:#b8b8b8;"></div>
<div class="b" style="left:55.4px;top:585.0914205344585px;width:472.30000000000007px;height:2.250351617440225px;background:#b8b8b8;"></div>
<div class="b" style="left:55.4px;top:605.3445850914205px;width:472.30000000000007px;height:2.250351617440225px;background:#b8b8b8;"></div>
<div class="b" style="left:55.4px;top:625.5977496483825px;width:472.30000000000007px;height:2.250351617440225px;background:#b8b8b8;"></div>
<div class="b" style="left:55.4px;top:648.1012658227847px;width:472.30000000000007px;height:2.250351617440225px;background:#b8b8b8;"></div>
<div class="b" style="left:55.4px;top:668.3544303797468px;width:472.30000000000007px;height:2.250351617440225px;background:#b8b8b8;"></div>
<div class="b" style="left:55.4px;top:688.6075949367088px;width:472.30000000000007px;height:2.250351617440225px;background:#b8b8b8;"></div>
<div class="b" style="left:55.4px;top:708.8607594936708px;width:472.30000000000007px;height:2.250351617440225px;background:#b8b8b8;"></div>
<div class="b" style="left:55.4px;top:731.3642756680731px;width:472.30000000000007px;height:2.250351617440225px;background:#b8b8b8;"></div>
<div class="b" style="left:55.4px;top:751.6174402250351px;width:472.30000000000007px;height:2.250351617440225px;background:#b8b8b8;"></div>
<div class="b" style="left:55.4px;top:771.8706047819971px;width:472.30000000000007px;height:2.250351617440225px;background:#b8b8b8;"></div>
<div class="b" style="left:55.4px;top:794.3741209563995px;width:472.30000000000007px;height:2.250351617440225px;background:#b8b8b8;"></div>
<div class="b" style="left:55.4px;top:814.6272855133615px;width:472.30000000000007px;height:2.250351617440225px;background:#b8b8b8;"></div>
<div class="b" style="left:55.4px;top:834.8804500703235px;width:472.30000000000007px;height:2.250351617440225px;background:#b8b8b8;"></div>
<div class="b" style="left:55.4px;top:311.35999999999996px;width:472.30000000000007px;height:44.7px;background:#6f8b57;"></div>
<div class="b" style="left:54.008438818565395px;top:311.35999999999996px;width:2.250351617440225px;height:536.8400000000001px;background:#a0a0a0;"></div>
<div class="b" style="left:155.27426160337552px;top:311.35999999999996px;width:2.250351617440225px;height:536.8400000000001px;background:#a0a0a0;"></div>
<div class="b" style="left:526.5822784810126px;top:311.35999999999996px;width:2.250351617440225px;height:536.8400000000001px;background:#a0a0a0;"></div>
<div class="b" style="left:55.4px;top:310.54852320675104px;width:472.30000000000007px;height:2.250351617440225px;background:#2f3a2a;"></div>
<div class="b" style="left:55.4px;top:355.55555555555554px;width:472.30000000000007px;height:2.250351617440225px;background:#2f3a2a;"></div>
<div class="b" style="left:54.008438818565395px;top:311.35999999999996px;width:2.250351617440225px;height:44.69999999999999px;background:#2f3a2a;"></div>
<div class="b" style="left:526.5822784810126px;top:311.35999999999996px;width:2.250351617440225px;height:44.69999999999999px;background:#2f3a2a;"></div>
<div class="b" style="left:155.27426160337552px;top:311.35999999999996px;width:2.250351617440225px;height:44.69999999999999px;background:#2f3a2a;"></div>
<div class="t c" style="left:-294.1px;width:800px;top:334.70px;font-size:12.4px;color:#fff;font-weight:bold;">MÃ DỰ ÁN</div>
<div class="t c" style="left:-57.94999999999999px;width:800px;top:334.70px;font-size:12.4px;color:#fff;font-weight:bold;">TÊN DỰ ÁN</div>
<div class="t c" style="left:-294.1px;width:800px;top:367.74px;font-size:15px;color:#474747;font-weight:normal;transform:scaleX(0.875);transform-origin:50% 0;">DA1</div>
<div class="t c" style="left:-57.94999999999999px;width:800px;top:367.74px;font-size:15px;color:#474747;font-weight:normal;transform:scaleX(0.875);transform-origin:50% 0;">Dự án công trình thủ thiêm 2</div>
<div class="t c" style="left:-294.1px;width:800px;top:388.62px;font-size:15px;color:#474747;font-weight:normal;transform:scaleX(0.875);transform-origin:50% 0;">DA2</div>
<div class="t c" style="left:-57.94999999999999px;width:800px;top:388.62px;font-size:15px;color:#474747;font-weight:normal;transform:scaleX(0.875);transform-origin:50% 0;">Dự án nhà cấp 4</div>
<div class="t c" style="left:-294.1px;width:800px;top:409.50px;font-size:15px;color:#474747;font-weight:normal;transform:scaleX(0.875);transform-origin:50% 0;">DA3</div>
<div class="t c" style="left:-57.94999999999999px;width:800px;top:409.50px;font-size:15px;color:#474747;font-weight:normal;transform:scaleX(0.875);transform-origin:50% 0;">Dự án cầu đường</div>
<div class="t c" style="left:-294.1px;width:800px;top:430.38px;font-size:15px;color:#474747;font-weight:normal;transform:scaleX(0.875);transform-origin:50% 0;">DA4</div>
<div class="t c" style="left:-57.94999999999999px;width:800px;top:430.38px;font-size:15px;color:#474747;font-weight:normal;transform:scaleX(0.875);transform-origin:50% 0;">Dự án nhà văn hóa thiếu nhi</div>
<div class="t c" style="left:-294.1px;width:800px;top:451.26px;font-size:15px;color:#474747;font-weight:normal;transform:scaleX(0.875);transform-origin:50% 0;">DA5</div>
<div class="t c" style="left:-57.94999999999999px;width:800px;top:451.26px;font-size:15px;color:#474747;font-weight:normal;transform:scaleX(0.875);transform-origin:50% 0;">Dự án nhà hát</div>
<div class="t c" style="left:-294.1px;width:800px;top:472.14px;font-size:15px;color:#474747;font-weight:normal;transform:scaleX(0.875);transform-origin:50% 0;">DA6</div>
<div class="t c" style="left:-57.94999999999999px;width:800px;top:472.14px;font-size:15px;color:#474747;font-weight:normal;transform:scaleX(0.875);transform-origin:50% 0;">Dự án tòa cao ốc</div>
<div class="t c" style="left:-294.1px;width:800px;top:493.02px;font-size:15px;color:#474747;font-weight:normal;transform:scaleX(0.875);transform-origin:50% 0;">DA7</div>
<div class="t c" style="left:-57.94999999999999px;width:800px;top:493.02px;font-size:15px;color:#474747;font-weight:normal;transform:scaleX(0.875);transform-origin:50% 0;">Dự án văn phòng</div>
<div class="b" style="left:569.8px;top:356.05999999999995px;width:334.4000000000001px;height:492.1400000000001px;background:#fff;"></div>
<div class="b" style="left:569.8px;top:375.80872011251756px;width:334.4000000000001px;height:2.250351617440225px;background:#b8b8b8;"></div>
<div class="b" style="left:569.8px;top:396.0618846694796px;width:334.4000000000001px;height:2.250351617440225px;background:#b8b8b8;"></div>
<div class="b" style="left:569.8px;top:418.56540084388183px;width:334.4000000000001px;height:2.250351617440225px;background:#b8b8b8;"></div>
<div class="b" style="left:569.8px;top:438.81856540084385px;width:334.4000000000001px;height:2.250351617440225px;background:#b8b8b8;"></div>
<div class="b" style="left:569.8px;top:459.07172995780587px;width:334.4000000000001px;height:2.250351617440225px;background:#b8b8b8;"></div>
<div class="b" style="left:569.8px;top:479.3248945147679px;width:334.4000000000001px;height:2.250351617440225px;background:#b8b8b8;"></div>
<div class="b" style="left:569.8px;top:501.82841068917014px;width:334.4000000000001px;height:2.250351617440225px;background:#b8b8b8;"></div>
<div class="b" style="left:569.8px;top:522.0815752461322px;width:334.4000000000001px;height:2.250351617440225px;background:#b8b8b8;"></div>
<div class="b" style="left:569.8px;top:542.3347398030942px;width:334.4000000000001px;height:2.250351617440225px;background:#b8b8b8;"></div>
<div class="b" style="left:569.8px;top:564.8382559774965px;width:334.4000000000001px;height:2.250351617440225px;background:#b8b8b8;"></div>
<div class="b" style="left:569.8px;top:585.0914205344585px;width:334.4000000000001px;height:2.250351617440225px;background:#b8b8b8;"></div>
<div class="b" style="left:569.8px;top:605.3445850914205px;width:334.4000000000001px;height:2.250351617440225px;background:#b8b8b8;"></div>
<div class="b" style="left:569.8px;top:625.5977496483825px;width:334.4000000000001px;height:2.250351617440225px;background:#b8b8b8;"></div>
<div class="b" style="left:569.8px;top:648.1012658227847px;width:334.4000000000001px;height:2.250351617440225px;background:#b8b8b8;"></div>
<div class="b" style="left:569.8px;top:668.3544303797468px;width:334.4000000000001px;height:2.250351617440225px;background:#b8b8b8;"></div>
<div class="b" style="left:569.8px;top:688.6075949367088px;width:334.4000000000001px;height:2.250351617440225px;background:#b8b8b8;"></div>
<div class="b" style="left:569.8px;top:708.8607594936708px;width:334.4000000000001px;height:2.250351617440225px;background:#b8b8b8;"></div>
<div class="b" style="left:569.8px;top:731.3642756680731px;width:334.4000000000001px;height:2.250351617440225px;background:#b8b8b8;"></div>
<div class="b" style="left:569.8px;top:751.6174402250351px;width:334.4000000000001px;height:2.250351617440225px;background:#b8b8b8;"></div>
<div class="b" style="left:569.8px;top:771.8706047819971px;width:334.4000000000001px;height:2.250351617440225px;background:#b8b8b8;"></div>
<div class="b" style="left:569.8px;top:794.3741209563995px;width:334.4000000000001px;height:2.250351617440225px;background:#b8b8b8;"></div>
<div class="b" style="left:569.8px;top:814.6272855133615px;width:334.4000000000001px;height:2.250351617440225px;background:#b8b8b8;"></div>
<div class="b" style="left:569.8px;top:834.8804500703235px;width:334.4000000000001px;height:2.250351617440225px;background:#b8b8b8;"></div>
<div class="b" style="left:569.8px;top:311.35999999999996px;width:334.4000000000001px;height:44.7px;background:#feb627;"></div>
<div class="b" style="left:569.338959212377px;top:311.35999999999996px;width:2.250351617440225px;height:536.8400000000001px;background:#a0a0a0;"></div>
<div class="b" style="left:902.3909985935302px;top:311.35999999999996px;width:2.250351617440225px;height:536.8400000000001px;background:#a0a0a0;"></div>
<div class="b" style="left:569.8px;top:310.54852320675104px;width:334.4000000000001px;height:2.250351617440225px;background:#7d6a45;"></div>
<div class="b" style="left:569.8px;top:355.55555555555554px;width:334.4000000000001px;height:2.250351617440225px;background:#7d6a45;"></div>
<div class="b" style="left:569.338959212377px;top:311.35999999999996px;width:2.250351617440225px;height:44.69999999999999px;background:#7d6a45;"></div>
<div class="b" style="left:902.3909985935302px;top:311.35999999999996px;width:2.250351617440225px;height:44.69999999999999px;background:#7d6a45;"></div>
<div class="t c" style="left:337.0px;width:800px;top:334.70px;font-size:12.4px;color:#fff;font-weight:bold;">TÊN GÓI THẦU</div>
<div class="t" style="left:573.8px;top:367.74px;font-size:15px;color:#474747;font-weight:normal;transform:scaleX(0.875);transform-origin:0 0;">Gói thầu: Mua sắm thiết bị văn phòng</div>
<div class="t" style="left:573.8px;top:388.62px;font-size:15px;color:#474747;font-weight:normal;transform:scaleX(0.875);transform-origin:0 0;">Gói thầu: Xây lắp công trình nhà làm việc</div>
<div class="t" style="left:573.8px;top:409.50px;font-size:15px;color:#474747;font-weight:normal;transform:scaleX(0.875);transform-origin:0 0;">Gói thầu: Cung cấp và lắp đặt hệ thống camera</div>
<div class="t" style="left:573.8px;top:430.38px;font-size:15px;color:#474747;font-weight:normal;transform:scaleX(0.875);transform-origin:0 0;">Gói thầu: Tư vấn giám sát thi công xây dựng</div>
<div class="t" style="left:573.8px;top:451.26px;font-size:15px;color:#474747;font-weight:normal;transform:scaleX(0.875);transform-origin:0 0;">Gói thầu: Mua sắm máy tính và thiết bị mạng</div>
<div class="t" style="left:573.8px;top:472.14px;font-size:15px;color:#474747;font-weight:normal;transform:scaleX(0.875);transform-origin:0 0;">Gói thầu: Bảo trì, sửa chữa hệ thống điện</div>
<div class="t" style="left:573.8px;top:493.02px;font-size:15px;color:#474747;font-weight:normal;transform:scaleX(0.875);transform-origin:0 0;">Gói thầu: Thiết kế bản vẽ thi công</div>
<div class="t" style="left:573.8px;top:513.90px;font-size:15px;color:#474747;font-weight:normal;transform:scaleX(0.875);transform-origin:0 0;">Gói thầu: Mua sắm vật tư y tế tiêu hao</div>
<div class="t" style="left:573.8px;top:534.78px;font-size:15px;color:#474747;font-weight:normal;transform:scaleX(0.875);transform-origin:0 0;">Gói thầu: Cung cấp dịch vụ vệ sinh công nghiệp</div>
<div class="t" style="left:573.8px;top:555.66px;font-size:15px;color:#474747;font-weight:normal;transform:scaleX(0.875);transform-origin:0 0;">Gói thầu: Đào tạo và chuyển giao công nghệ</div>
<div class="t" style="left:573.8px;top:576.54px;font-size:15px;color:#474747;font-weight:normal;transform:scaleX(0.875);transform-origin:0 0;">Gói thầu: Cung cấp dịch vụ phần mềm kế toán</div>
<div class="t" style="left:573.8px;top:597.42px;font-size:15px;color:#474747;font-weight:normal;transform:scaleX(0.875);transform-origin:0 0;">Gói thầu: Mua sắm trang thiết bị phòng họp</div>
<div class="t" style="left:573.8px;top:618.30px;font-size:15px;color:#474747;font-weight:normal;transform:scaleX(0.875);transform-origin:0 0;">Gói thầu: In ấn tài liệu, hồ sơ</div>
<div class="t" style="left:573.8px;top:639.18px;font-size:15px;color:#474747;font-weight:normal;transform:scaleX(0.875);transform-origin:0 0;">Gói thầu: Mua sắm bàn ghế hội trường</div>
<div class="t" style="left:573.8px;top:660.06px;font-size:15px;color:#474747;font-weight:normal;transform:scaleX(0.875);transform-origin:0 0;">Gói thầu: Cung cấp dịch vụ bảo trì bảo dưỡng điều hòa</div>
<div class="b" style="left:941.3px;top:356.05999999999995px;width:246.20000000000005px;height:492.1400000000001px;background:#fff;"></div>
<div class="b" style="left:941.3px;top:375.80872011251756px;width:246.20000000000005px;height:2.250351617440225px;background:#b8b8b8;"></div>
<div class="b" style="left:941.3px;top:396.0618846694796px;width:246.20000000000005px;height:2.250351617440225px;background:#b8b8b8;"></div>
<div class="b" style="left:941.3px;top:418.56540084388183px;width:246.20000000000005px;height:2.250351617440225px;background:#b8b8b8;"></div>
<div class="b" style="left:941.3px;top:438.81856540084385px;width:246.20000000000005px;height:2.250351617440225px;background:#b8b8b8;"></div>
<div class="b" style="left:941.3px;top:459.07172995780587px;width:246.20000000000005px;height:2.250351617440225px;background:#b8b8b8;"></div>
<div class="b" style="left:941.3px;top:479.3248945147679px;width:246.20000000000005px;height:2.250351617440225px;background:#b8b8b8;"></div>
<div class="b" style="left:941.3px;top:501.82841068917014px;width:246.20000000000005px;height:2.250351617440225px;background:#b8b8b8;"></div>
<div class="b" style="left:941.3px;top:522.0815752461322px;width:246.20000000000005px;height:2.250351617440225px;background:#b8b8b8;"></div>
<div class="b" style="left:941.3px;top:542.3347398030942px;width:246.20000000000005px;height:2.250351617440225px;background:#b8b8b8;"></div>
<div class="b" style="left:941.3px;top:564.8382559774965px;width:246.20000000000005px;height:2.250351617440225px;background:#b8b8b8;"></div>
<div class="b" style="left:941.3px;top:585.0914205344585px;width:246.20000000000005px;height:2.250351617440225px;background:#b8b8b8;"></div>
<div class="b" style="left:941.3px;top:605.3445850914205px;width:246.20000000000005px;height:2.250351617440225px;background:#b8b8b8;"></div>
<div class="b" style="left:941.3px;top:625.5977496483825px;width:246.20000000000005px;height:2.250351617440225px;background:#b8b8b8;"></div>
<div class="b" style="left:941.3px;top:648.1012658227847px;width:246.20000000000005px;height:2.250351617440225px;background:#b8b8b8;"></div>
<div class="b" style="left:941.3px;top:668.3544303797468px;width:246.20000000000005px;height:2.250351617440225px;background:#b8b8b8;"></div>
<div class="b" style="left:941.3px;top:688.6075949367088px;width:246.20000000000005px;height:2.250351617440225px;background:#b8b8b8;"></div>
<div class="b" style="left:941.3px;top:708.8607594936708px;width:246.20000000000005px;height:2.250351617440225px;background:#b8b8b8;"></div>
<div class="b" style="left:941.3px;top:731.3642756680731px;width:246.20000000000005px;height:2.250351617440225px;background:#b8b8b8;"></div>
<div class="b" style="left:941.3px;top:751.6174402250351px;width:246.20000000000005px;height:2.250351617440225px;background:#b8b8b8;"></div>
<div class="b" style="left:941.3px;top:771.8706047819971px;width:246.20000000000005px;height:2.250351617440225px;background:#b8b8b8;"></div>
<div class="b" style="left:941.3px;top:794.3741209563995px;width:246.20000000000005px;height:2.250351617440225px;background:#b8b8b8;"></div>
<div class="b" style="left:941.3px;top:814.6272855133615px;width:246.20000000000005px;height:2.250351617440225px;background:#b8b8b8;"></div>
<div class="b" style="left:941.3px;top:834.8804500703235px;width:246.20000000000005px;height:2.250351617440225px;background:#b8b8b8;"></div>
<div class="b" style="left:941.3px;top:311.35999999999996px;width:246.20000000000005px;height:44.7px;background:#6f8b57;"></div>
<div class="b" style="left:940.646976090014px;top:311.35999999999996px;width:2.250351617440225px;height:536.8400000000001px;background:#a0a0a0;"></div>
<div class="b" style="left:1185.9353023909985px;top:311.35999999999996px;width:2.250351617440225px;height:536.8400000000001px;background:#a0a0a0;"></div>
<div class="b" style="left:941.3px;top:310.54852320675104px;width:246.20000000000005px;height:2.250351617440225px;background:#2f3a2a;"></div>
<div class="b" style="left:941.3px;top:355.55555555555554px;width:246.20000000000005px;height:2.250351617440225px;background:#2f3a2a;"></div>
<div class="b" style="left:940.646976090014px;top:311.35999999999996px;width:2.250351617440225px;height:44.69999999999999px;background:#2f3a2a;"></div>
<div class="b" style="left:1185.9353023909985px;top:311.35999999999996px;width:2.250351617440225px;height:44.69999999999999px;background:#2f3a2a;"></div>
<div class="t c" style="left:664.4000000000001px;width:800px;top:334.70px;font-size:12.4px;color:#fff;font-weight:bold;">TÊN GIAI ĐOẠN</div>
<div class="t" style="left:945.3px;top:367.74px;font-size:15px;color:#474747;font-weight:normal;transform:scaleX(0.875);transform-origin:0 0;">Lập chủ trương đầu tư</div>
<div class="t" style="left:945.3px;top:388.62px;font-size:15px;color:#474747;font-weight:normal;transform:scaleX(0.875);transform-origin:0 0;">Khảo sát &amp; đánh giá nhu cầu</div>
<div class="t" style="left:945.3px;top:409.50px;font-size:15px;color:#474747;font-weight:normal;transform:scaleX(0.875);transform-origin:0 0;">Lập báo cáo nghiên cứu tiền khả thi</div>
<div class="t" style="left:945.3px;top:430.38px;font-size:15px;color:#474747;font-weight:normal;transform:scaleX(0.875);transform-origin:0 0;">Thẩm định &amp; phê duyệt chủ trương</div>
<div class="t" style="left:945.3px;top:451.26px;font-size:15px;color:#474747;font-weight:normal;transform:scaleX(0.875);transform-origin:0 0;">Lập báo cáo nghiên cứu khả thi</div>
<div class="t" style="left:945.3px;top:472.14px;font-size:15px;color:#474747;font-weight:normal;transform:scaleX(0.875);transform-origin:0 0;">Thiết kế cơ sở</div>
<div class="t" style="left:945.3px;top:493.02px;font-size:15px;color:#474747;font-weight:normal;transform:scaleX(0.875);transform-origin:0 0;">Thẩm định &amp; phê duyệt thiết kế cơ sở</div>
<div class="t" style="left:945.3px;top:513.90px;font-size:15px;color:#474747;font-weight:normal;transform:scaleX(0.875);transform-origin:0 0;">Thiết kế kỹ thuật – bản vẽ thi công</div>
<div class="t" style="left:945.3px;top:534.78px;font-size:15px;color:#474747;font-weight:normal;transform:scaleX(0.875);transform-origin:0 0;">Lập dự toán tổng mức đầu tư</div>
<div class="t" style="left:945.3px;top:555.66px;font-size:15px;color:#474747;font-weight:normal;transform:scaleX(0.875);transform-origin:0 0;">Thẩm định dự toán</div>
<div class="t" style="left:945.3px;top:576.54px;font-size:15px;color:#474747;font-weight:normal;transform:scaleX(0.875);transform-origin:0 0;">Phê duyệt dự toán</div>
<div class="t" style="left:945.3px;top:597.42px;font-size:15px;color:#474747;font-weight:normal;transform:scaleX(0.875);transform-origin:0 0;">Chuẩn bị hồ sơ mời thầu</div>
<div class="t" style="left:945.3px;top:618.30px;font-size:15px;color:#474747;font-weight:normal;transform:scaleX(0.875);transform-origin:0 0;">Tổ chức lựa chọn nhà thầu</div>
<div class="t" style="left:945.3px;top:639.18px;font-size:15px;color:#474747;font-weight:normal;transform:scaleX(0.875);transform-origin:0 0;">Đánh giá hồ sơ dự thầu</div>
<div class="t" style="left:945.3px;top:660.06px;font-size:15px;color:#474747;font-weight:normal;transform:scaleX(0.875);transform-origin:0 0;">Phê duyệt kết quả lựa chọn nhà thầu</div>
<div class="t" style="left:945.3px;top:680.94px;font-size:15px;color:#474747;font-weight:normal;transform:scaleX(0.875);transform-origin:0 0;">Ký kết hợp đồng</div>
<div class="t" style="left:945.3px;top:701.82px;font-size:15px;color:#474747;font-weight:normal;transform:scaleX(0.875);transform-origin:0 0;">Thi công xây dựng</div>
<div class="t" style="left:945.3px;top:722.70px;font-size:15px;color:#474747;font-weight:normal;transform:scaleX(0.875);transform-origin:0 0;">Tư vấn giám sát thi công</div>
<div class="t" style="left:945.3px;top:743.58px;font-size:15px;color:#474747;font-weight:normal;transform:scaleX(0.875);transform-origin:0 0;">Nghiệm thu giai đoạn</div>
<div class="t" style="left:945.3px;top:764.46px;font-size:15px;color:#474747;font-weight:normal;transform:scaleX(0.875);transform-origin:0 0;">Nghiệm thu hoàn thành công trình</div>
<div class="t" style="left:945.3px;top:785.34px;font-size:15px;color:#474747;font-weight:normal;transform:scaleX(0.875);transform-origin:0 0;">Bàn giao công trình đưa vào sử dụng</div>
<div class="t" style="left:945.3px;top:806.22px;font-size:15px;color:#474747;font-weight:normal;transform:scaleX(0.875);transform-origin:0 0;">Quyết toán vốn đầu tư</div>
<div class="t" style="left:945.3px;top:827.10px;font-size:15px;color:#474747;font-weight:normal;transform:scaleX(0.875);transform-origin:0 0;">Bảo hành &amp; bảo trì công trìn</div>
<div class="b" style="left:1218.6px;top:376.93999999999994px;width:404.4000000000001px;height:471.2600000000001px;background:#fff;"></div>
<div class="b" style="left:1218.6px;top:396.0618846694796px;width:404.4000000000001px;height:2.250351617440225px;background:#b8b8b8;"></div>
<div class="b" style="left:1218.6px;top:418.56540084388183px;width:404.4000000000001px;height:2.250351617440225px;background:#b8b8b8;"></div>
<div class="b" style="left:1218.6px;top:438.81856540084385px;width:404.4000000000001px;height:2.250351617440225px;background:#b8b8b8;"></div>
<div class="b" style="left:1218.6px;top:459.07172995780587px;width:404.4000000000001px;height:2.250351617440225px;background:#b8b8b8;"></div>
<div class="b" style="left:1218.6px;top:479.3248945147679px;width:404.4000000000001px;height:2.250351617440225px;background:#b8b8b8;"></div>
<div class="b" style="left:1218.6px;top:501.82841068917014px;width:404.4000000000001px;height:2.250351617440225px;background:#b8b8b8;"></div>
<div class="b" style="left:1218.6px;top:522.0815752461322px;width:404.4000000000001px;height:2.250351617440225px;background:#b8b8b8;"></div>
<div class="b" style="left:1218.6px;top:542.3347398030942px;width:404.4000000000001px;height:2.250351617440225px;background:#b8b8b8;"></div>
<div class="b" style="left:1218.6px;top:564.8382559774965px;width:404.4000000000001px;height:2.250351617440225px;background:#b8b8b8;"></div>
<div class="b" style="left:1218.6px;top:585.0914205344585px;width:404.4000000000001px;height:2.250351617440225px;background:#b8b8b8;"></div>
<div class="b" style="left:1218.6px;top:605.3445850914205px;width:404.4000000000001px;height:2.250351617440225px;background:#b8b8b8;"></div>
<div class="b" style="left:1218.6px;top:625.5977496483825px;width:404.4000000000001px;height:2.250351617440225px;background:#b8b8b8;"></div>
<div class="b" style="left:1218.6px;top:648.1012658227847px;width:404.4000000000001px;height:2.250351617440225px;background:#b8b8b8;"></div>
<div class="b" style="left:1218.6px;top:668.3544303797468px;width:404.4000000000001px;height:2.250351617440225px;background:#b8b8b8;"></div>
<div class="b" style="left:1218.6px;top:688.6075949367088px;width:404.4000000000001px;height:2.250351617440225px;background:#b8b8b8;"></div>
<div class="b" style="left:1218.6px;top:708.8607594936708px;width:404.4000000000001px;height:2.250351617440225px;background:#b8b8b8;"></div>
<div class="b" style="left:1218.6px;top:731.3642756680731px;width:404.4000000000001px;height:2.250351617440225px;background:#b8b8b8;"></div>
<div class="b" style="left:1218.6px;top:751.6174402250351px;width:404.4000000000001px;height:2.250351617440225px;background:#b8b8b8;"></div>
<div class="b" style="left:1218.6px;top:771.8706047819971px;width:404.4000000000001px;height:2.250351617440225px;background:#b8b8b8;"></div>
<div class="b" style="left:1218.6px;top:794.3741209563995px;width:404.4000000000001px;height:2.250351617440225px;background:#b8b8b8;"></div>
<div class="b" style="left:1218.6px;top:814.6272855133615px;width:404.4000000000001px;height:2.250351617440225px;background:#b8b8b8;"></div>
<div class="b" style="left:1218.6px;top:834.8804500703235px;width:404.4000000000001px;height:2.250351617440225px;background:#b8b8b8;"></div>
<div class="b" style="left:1218.6px;top:311.35999999999996px;width:404.4000000000001px;height:44.7px;background:#feb627;"></div>
<div class="b" style="left:1218.6px;top:356.05999999999995px;width:404.4000000000001px;height:20.88px;background:#6f8b57;"></div>
<div class="b" style="left:1217.4402250351618px;top:311.35999999999996px;width:2.250351617440225px;height:536.8400000000001px;background:#a0a0a0;"></div>
<div class="b" style="left:1422.2222222222222px;top:356.05999999999995px;width:2.250351617440225px;height:492.1400000000001px;background:#a0a0a0;"></div>
<div class="b" style="left:1218.6px;top:310.54852320675104px;width:404.4000000000001px;height:2.250351617440225px;background:#7d6a45;"></div>
<div class="b" style="left:1218.6px;top:355.55555555555554px;width:404.4000000000001px;height:2.250351617440225px;background:#7d6a45;"></div>
<div class="b" style="left:1217.4402250351618px;top:311.35999999999996px;width:2.250351617440225px;height:44.69999999999999px;background:#7d6a45;"></div>
<div class="b" style="left:1622.5035161744022px;top:311.35999999999996px;width:2.250351617440225px;height:44.69999999999999px;background:#7d6a45;"></div>
<div class="b" style="left:1218.6px;top:355.55555555555554px;width:404.4000000000001px;height:2.250351617440225px;background:#2f3a2a;"></div>
<div class="b" style="left:1218.6px;top:375.80872011251756px;width:404.4000000000001px;height:2.250351617440225px;background:#2f3a2a;"></div>
<div class="b" style="left:1217.4402250351618px;top:356.05999999999995px;width:2.250351617440225px;height:20.879999999999995px;background:#2f3a2a;"></div>
<div class="b" style="left:1622.5035161744022px;top:356.05999999999995px;width:2.250351617440225px;height:20.879999999999995px;background:#2f3a2a;"></div>
<div class="b" style="left:1422.2222222222222px;top:356.05999999999995px;width:2.250351617440225px;height:20.879999999999995px;background:#2f3a2a;"></div>
<div class="t c" style="left:1020.8px;width:800px;top:334.70px;font-size:12.4px;color:#fff;font-weight:bold;">MỨC ĐỘ VÀ TÌNH TRẠNG</div>
<div class="t c" style="left:921.0px;width:800px;top:368.57px;font-size:12.6px;color:#fff;font-weight:bold;transform:scaleX(1);transform-origin:50% 0;">Mức độ</div>
<div class="t c" style="left:1123.2px;width:800px;top:368.57px;font-size:12.6px;color:#fff;font-weight:bold;transform:scaleX(1);transform-origin:50% 0;">Tình trạng</div>
<div class="t c" style="left:921.0px;width:800px;top:388.62px;font-size:15px;color:#474747;font-weight:normal;transform:scaleX(0.875);transform-origin:50% 0;">Rất thấp</div>
<div class="t c" style="left:921.0px;width:800px;top:409.50px;font-size:15px;color:#474747;font-weight:normal;transform:scaleX(0.875);transform-origin:50% 0;">Thấp</div>
<div class="t c" style="left:921.0px;width:800px;top:430.38px;font-size:15px;color:#474747;font-weight:normal;transform:scaleX(0.875);transform-origin:50% 0;">Trung bình</div>
<div class="t c" style="left:921.0px;width:800px;top:451.26px;font-size:15px;color:#474747;font-weight:normal;transform:scaleX(0.875);transform-origin:50% 0;">Khá</div>
<div class="t c" style="left:921.0px;width:800px;top:472.14px;font-size:15px;color:#474747;font-weight:normal;transform:scaleX(0.875);transform-origin:50% 0;">Cao</div>
<div class="t c" style="left:921.0px;width:800px;top:493.02px;font-size:15px;color:#474747;font-weight:normal;transform:scaleX(0.875);transform-origin:50% 0;">Rất cao</div>
<div class="t c" style="left:1123.2px;width:800px;top:388.62px;font-size:15px;color:#474747;font-weight:normal;transform:scaleX(0.875);transform-origin:50% 0;">Chưa bắt đầu</div>
<div class="t c" style="left:1123.2px;width:800px;top:409.50px;font-size:15px;color:#474747;font-weight:normal;transform:scaleX(0.875);transform-origin:50% 0;">Đang thực hiện</div>
<div class="t c" style="left:1123.2px;width:800px;top:430.38px;font-size:15px;color:#474747;font-weight:normal;transform:scaleX(0.875);transform-origin:50% 0;">Đang chờ xử lý</div>
<div class="t c" style="left:1123.2px;width:800px;top:451.26px;font-size:15px;color:#474747;font-weight:normal;transform:scaleX(0.875);transform-origin:50% 0;">Tạm dừng</div>
<div class="t c" style="left:1123.2px;width:800px;top:472.14px;font-size:15px;color:#474747;font-weight:normal;transform:scaleX(0.875);transform-origin:50% 0;">Hoàn thành</div>
<div class="t c" style="left:1123.2px;width:800px;top:493.02px;font-size:15px;color:#474747;font-weight:normal;transform:scaleX(0.875);transform-origin:50% 0;">Hoàn thành một phần</div>
<div class="t c" style="left:1123.2px;width:800px;top:513.90px;font-size:15px;color:#474747;font-weight:normal;transform:scaleX(0.875);transform-origin:50% 0;">Trễ tiến độ</div>
<div class="t c" style="left:1123.2px;width:800px;top:534.78px;font-size:15px;color:#474747;font-weight:normal;transform:scaleX(0.875);transform-origin:50% 0;">Đúng tiến độ</div>
<div class="t c" style="left:1123.2px;width:800px;top:555.66px;font-size:15px;color:#474747;font-weight:normal;transform:scaleX(0.875);transform-origin:50% 0;">Hủy bỏ</div>
<div class="t c" style="left:1123.2px;width:800px;top:576.54px;font-size:15px;color:#474747;font-weight:normal;transform:scaleX(0.875);transform-origin:50% 0;">Đã nghiệm thu</div>
<div class="t c" style="left:1123.2px;width:800px;top:597.42px;font-size:15px;color:#474747;font-weight:normal;transform:scaleX(0.875);transform-origin:50% 0;">Đã bàn giao</div>
<div class="t c" style="left:1123.2px;width:800px;top:618.30px;font-size:15px;color:#474747;font-weight:normal;transform:scaleX(0.875);transform-origin:50% 0;">Đang bảo trì</div>
<div class="b" style="left:1588px;top:165.2px;width:12px;height:683.0px;background:#fff;border-left:1px solid #e1e3e1;"></div>
<div class="b" style="left:1590px;top:166.5px;width:9px;height:40.5px;background:#dadce0;border-radius:4.5px;"></div>
<svg class="i" style="left:1589px;top:818px" width="10" height="30" viewBox="0 0 10 30"><path d="M2 8 L5 4 L8 8Z M2 20 L5 24 L8 20Z" fill="#aaa"/></svg>
<div class="b" style="left:0px;top:848.2px;width:1600px;height:14.3px;background:#fff;"></div>
<div class="b" style="left:0px;top:848.2px;width:46px;height:14.3px;background:#f8f9fa;"></div>
<div class="b" style="left:75.8px;top:850.3px;width:1139px;height:10.5px;background:#dadce0;border-radius:5px;"></div>
<svg class="i" style="left:1556px;top:851px" width="30" height="10" viewBox="0 0 30 10"><path d="M10 2 L6 5 L10 8Z M20 2 L24 5 L20 8Z" fill="#aaa"/></svg>
<div class="b" style="left:0px;top:862.5px;width:1600px;height:37.5px;background:#f9fbfd;border-top:1px solid #e1e3e1;"></div>
<div class="b" style="left:56px;top:880px;width:10px;height:2px;background:#444746;"></div>
<div class="b" style="left:60px;top:876px;width:2px;height:10px;background:#444746;"></div>
<div class="b" style="left:93px;top:877px;width:14.6px;height:4px;background:#5f6368;"></div>
<div class="b" style="left:93px;top:883.5px;width:14.6px;height:2px;background:#5f6368;"></div>
<div class="b" style="left:132.8px;top:863.5px;width:84.2px;height:36.5px;background:#e1e9f7;"></div>
<div class="b" style="left:132.8px;top:895.5px;width:84.2px;height:4.5px;background:#feb627;"></div>
<div class="t" style="left:145px;top:881.94px;font-size:14.6px;color:#2a63d4;font-weight:bold;">Setup</div>
<svg class="i" style="left:196.5px;top:879px" width="9" height="6" viewBox="0 0 10 6"><path d="M0 0 L5 5 L10 0Z" fill="#0b57d0"/></svg>
<div class="b" style="left:217px;top:895.5px;width:223.6px;height:4.5px;background:#6f8b57;"></div>
<div class="t" style="left:230px;top:881.73px;font-size:15.2px;color:#444746;font-weight:normal;-webkit-text-stroke:0.45px #444746;">Quản lý công việc &amp; dự án</div>
<svg class="i" style="left:420.5px;top:879px" width="9" height="6" viewBox="0 0 10 6"><path d="M0 0 L5 5 L10 0Z" fill="#444746"/></svg>
<svg class="i" style="left:1565px;top:874px" width="12" height="16" viewBox="0 0 12 16"><path d="M8.5 3 L4 8 L8.5 13" stroke="#5f6368" stroke-width="2.2" fill="none"/></svg>
</div></body></html>
